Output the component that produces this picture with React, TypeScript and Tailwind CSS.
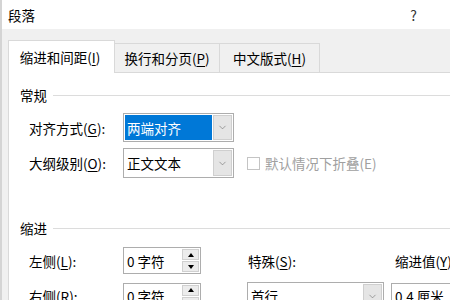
import { ChevronDown } from "lucide-react";

const font = "font-['Noto_Sans_CJK_SC','Noto_Sans',sans-serif]";

function Key({ k }: { k: string }) {
  return (
    <>
      (<span className="underline underline-offset-2">{k}</span>)
    </>
  );
}

function Select({
  value,
  width,
  height,
  selected,
}: {
  value: string;
  width: string;
  height: string;
  selected?: boolean;
}) {
  return (
    <div
      className={`${width} ${height} flex border border-[#adadad] bg-white`}
    >
      <div className="flex-1 p-[1px]">
        <div
          className={`h-full flex items-center pl-[2px] ${
            selected ? "bg-[#0078d7] text-white" : "text-black"
          }`}
        >
          {value}
        </div>
      </div>
      <div className="w-[19px] my-[1px] mr-[1px] bg-[#e5e5e5] border border-[#cfcfcf] flex items-center justify-center">
        <ChevronDown size={11} strokeWidth={1.2} className="text-[#606060]" />
      </div>
    </div>
  );
}

function Spin({ value }: { value: string }) {
  return (
    <div className="w-[78px] h-[27px] flex border border-[#adadad] bg-white">
      <div className="flex-1 flex items-center pl-[3px]">{value}</div>
      <div className="w-[18px] flex flex-col gap-[1px] py-[1px] pr-[1px]">
        <div className="flex-1 bg-[#ececec] border border-[#d0d0d0] flex items-center justify-center">
          <div className="w-0 h-0 border-l-[3px] border-r-[3px] border-b-[4px] border-l-transparent border-r-transparent border-b-black" />
        </div>
        <div className="flex-1 bg-[#ececec] border border-[#d0d0d0] flex items-center justify-center">
          <div className="w-0 h-0 border-l-[3px] border-r-[3px] border-t-[4px] border-l-transparent border-r-transparent border-t-black" />
        </div>
      </div>
    </div>
  );
}

function GroupTitle({ title }: { title: string }) {
  return (
    <div className="flex items-center h-[20px] pl-[11px]">
      <span>{title}</span>
      <div className="flex-1 ml-[6px] h-px bg-[#dcdcdc]" />
    </div>
  );
}

export default function App() {
  return (
    <div
      className={`w-[450px] h-[300px] overflow-hidden bg-[#f0f0f0] text-[13.5px] leading-[20px] text-black border-l-2 border-[#d4d4d4] ${font}`}
    >
      <div className="h-[29px] bg-white flex items-center justify-between pl-[6px] pr-[33px]">
        <span>段落</span>
        <span className="text-[14px] text-[#333]">?</span>
      </div>

      <div className="h-[43px] flex items-end pl-[6px]">
        <div className="relative z-10 h-[33px] w-[107px] -mb-px bg-white border border-b-0 border-[#d9d9d9] flex items-center justify-center pb-[1px] pr-[3px]">
          缩进和间距<Key k="I" />
        </div>
        <div className="h-[29px] w-[105px] border-t border-r border-[#d9d9d9] flex items-center justify-center">
          换行和分页<Key k="P" />
        </div>
        <div className="h-[29px] w-[100px] border-t border-r border-[#d9d9d9] flex items-center justify-center">
          中文版式<Key k="H" />
        </div>
      </div>

      <div className="ml-[6px] h-[260px] bg-white border-l border-t border-[#d9d9d9] pt-[12px]">
        <GroupTitle title="常规" />

        <div className="mt-[8px] flex flex-col gap-[6px] pl-[20px]">
          <div className="flex items-center">
            <div className="w-[94px]">
              对齐方式<Key k="G" />:
            </div>
            <Select value="两端对齐" width="w-[111px]" height="h-[29px]" selected />
          </div>
          <div className="flex items-center">
            <div className="w-[94px]">
              大纲级别<Key k="O" />:
            </div>
            <Select value="正文文本" width="w-[111px]" height="h-[30px]" />
            <div className="ml-[13px] w-[13px] h-[13px] border border-[#c4c4c4] bg-white" />
            <span className="ml-[5px] text-[#a0a0a0]">默认情况下折叠(E)</span>
          </div>
        </div>

        <div className="mt-[40px]">
          <GroupTitle title="缩进" />
        </div>

        <div className="mt-[9px] pl-[20px] grid grid-cols-[218px_148px_auto] gap-y-[8px] items-center">
          <div className="flex items-center">
            <div className="w-[94px]">
              左侧<Key k="L" />:
            </div>
            <Spin value="0 字符" />
          </div>
          <div className="pl-[1px]">
            特殊<Key k="S" />:
          </div>
          <div className="whitespace-nowrap">
            缩进值<Key k="Y" />:
          </div>

          <div className="flex items-center">
            <div className="w-[94px]">
              右侧<Key k="R" />:
            </div>
            <Spin value="0 字符" />
          </div>
          <Select value="首行" width="w-[137px]" height="h-[28px]" />
          <div className="w-[80px] h-[27px] border border-[#adadad] flex items-center pl-[3px] -ml-[4px] whitespace-nowrap">
            0.4 厘米
          </div>
        </div>
      </div>
    </div>
  );
}
